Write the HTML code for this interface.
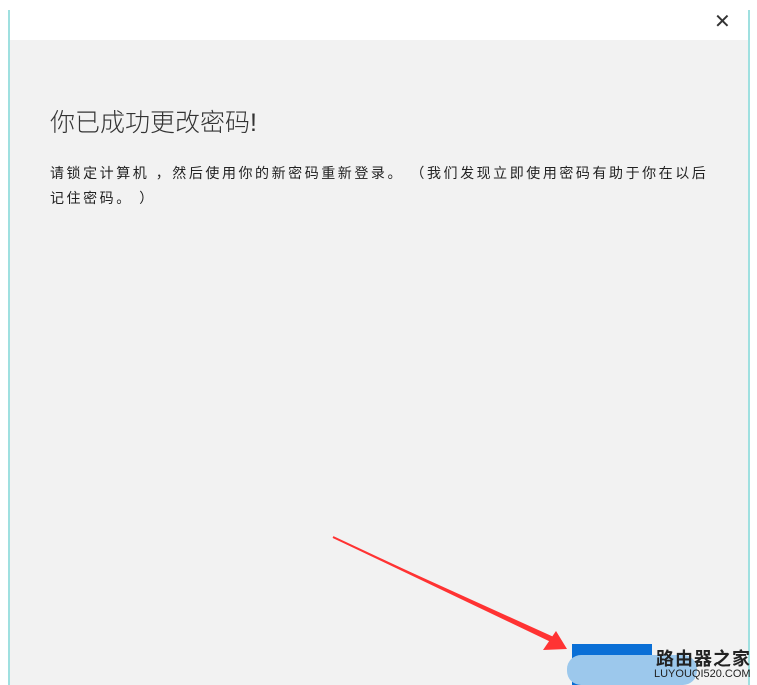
<!DOCTYPE html>
<html><head><meta charset="utf-8"><style>
body{margin:0;width:757px;height:685px;background:#fff;position:relative;overflow:hidden;font-family:"Liberation Sans","Noto Sans CJK SC",sans-serif}
.l{position:absolute;left:8px;top:10px;width:2px;height:675px;background:#9fe0e0}
.r{position:absolute;left:748px;top:10px;width:2px;height:675px;background:#9fe0e0}
.g{position:absolute;left:10px;top:40px;width:738px;height:645px;background:#f2f2f2}
.x{position:absolute;left:714px;top:9px;font-size:20px;color:#333}
h1{position:absolute;left:50px;top:103px;margin:0;font-weight:300;font-size:25px;color:#333}
p{position:absolute;left:50px;top:161px;margin:0;width:700px;font-size:14px;line-height:25px;color:#222;letter-spacing:2.55px;white-space:nowrap}
.btn{position:absolute;left:572px;top:644px;width:80px;height:41px;background:#0a6fd6}
.blur{position:absolute;left:567px;top:655px;width:130px;height:30px;background:#9cc8ec;border-radius:14px}
.wm{position:absolute;left:656px;top:645px;font-weight:bold;font-size:18px;color:#222;letter-spacing:1px}
.wm2{position:absolute;left:654px;top:668px;font-size:11px;color:#222}
</style></head><body>
<div class="g"></div><div class="l"></div><div class="r"></div>
<div class="x">✕</div>
<h1>你已成功更改密码!</h1>
<p>请锁定计算机 ，然后使用你的新密码重新登录。 （我们发现立即使用密码有助于你在以后<br>记住密码。 ）</p>
<svg style="position:absolute;left:0;top:0" width="757" height="685"><polygon points="333,537 556,638 553,643 333,538" fill="#f33"/><line x1="333" y1="537" x2="555" y2="641" stroke="#f33" stroke-width="2"/><polygon points="567,649 543,650 556,631" fill="#f33"/></svg>
<div class="btn"></div><div class="blur"></div>
<div class="wm">路由器之家</div><div class="wm2">LUYOUQI520.COM</div>
</body></html>
